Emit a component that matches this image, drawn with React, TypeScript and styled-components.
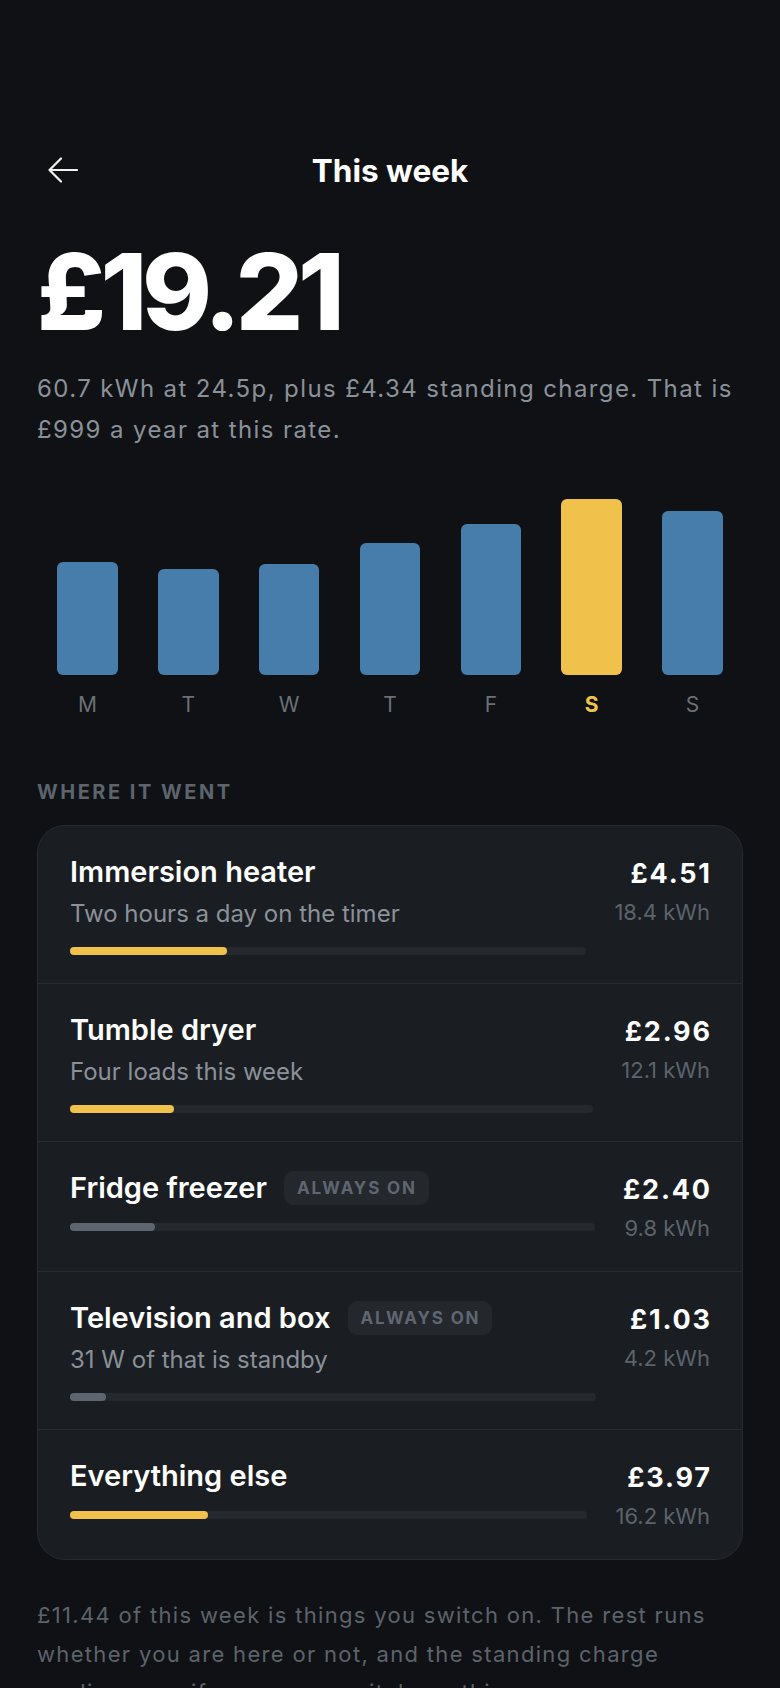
import styled, { createGlobalStyle } from 'styled-components';

const GlobalStyle = createGlobalStyle`
  html, body {
    margin: 0;
    padding: 0;
    background: #0f1115;
  }
  body {
    font-family: Inter, "Noto Sans", sans-serif;
    color: #ffffff;
    -webkit-font-smoothing: antialiased;
  }
`;

const TOTAL_KWH = 60.7;

const days = [
  { label: 'M', height: 64 },
  { label: 'T', height: 60 },
  { label: 'W', height: 63 },
  { label: 'T', height: 75 },
  { label: 'F', height: 86 },
  { label: 'S', height: 100, today: true },
  { label: 'S', height: 93 },
];

type Item = {
  name: string;
  note?: string;
  alwaysOn?: boolean;
  price: string;
  kwh: number;
};

const items: Item[] = [
  { name: 'Immersion heater', note: 'Two hours a day on the timer', price: '£4.51', kwh: 18.4 },
  { name: 'Tumble dryer', note: 'Four loads this week', price: '£2.96', kwh: 12.1 },
  { name: 'Fridge freezer', alwaysOn: true, price: '£2.40', kwh: 9.8 },
  { name: 'Television and box', note: '31 W of that is standby', alwaysOn: true, price: '£1.03', kwh: 4.2 },
  { name: 'Everything else', price: '£3.97', kwh: 16.2 },
];

const BackArrow = () => (
  <svg width="30" height="26" viewBox="0 0 30 26" fill="none">
    <path
      d="M13 1.5 1.5 13 13 24.5M1.5 13H29"
      stroke="#f2f2f2"
      strokeWidth="2.2"
      strokeLinecap="round"
      strokeLinejoin="round"
    />
  </svg>
);

export default function App() {
  return (
    <SPage>
      <GlobalStyle />
      <SHeader>
        <SBackButton aria-label="Back">
          <BackArrow />
        </SBackButton>
        <STitle>This week</STitle>
        <span />
      </SHeader>

      <SAmount>£19.21</SAmount>
      <SSummary>60.7 kWh at 24.5p, plus £4.34 standing charge. That is £999 a year at this rate.</SSummary>

      <SChart>
        {days.map((day, i) => (
          <SDay key={i}>
            <SBarSlot>
              <SBar $today={day.today} style={{ height: `${day.height}%` }} />
            </SBarSlot>
            <SDayLabel $today={day.today}>{day.label}</SDayLabel>
          </SDay>
        ))}
      </SChart>

      <SSectionLabel>Where it went</SSectionLabel>
      <SCard>
        {items.map((item) => (
          <SRow key={item.name}>
            <SMain>
              <STitleLine>
                <SItemName>{item.name}</SItemName>
                {item.alwaysOn && <SBadge>Always on</SBadge>}
              </STitleLine>
              {item.note && <SNote>{item.note}</SNote>}
              <STrack>
                <SFill $muted={item.alwaysOn} style={{ width: `${(item.kwh / TOTAL_KWH) * 100}%` }} />
              </STrack>
            </SMain>
            <SFigures>
              <SPrice>{item.price}</SPrice>
              <SKwh>{item.kwh.toFixed(1)} kWh</SKwh>
            </SFigures>
          </SRow>
        ))}
      </SCard>

      <SFootnote>
        £11.44 of this week is things you switch on. The rest runs whether you are here or not, and the standing charge
        applies even if you never switch anything on.
      </SFootnote>
    </SPage>
  );
}

const SPage = styled.div`
  box-sizing: border-box;
  min-height: 1688px;
  padding: 140px 37px 48px;
`;

const SHeader = styled.header`
  display: grid;
  grid-template-columns: 1fr auto 1fr;
  align-items: center;
  height: 60px;
`;

const SBackButton = styled.button`
  justify-self: start;
  display: flex;
  align-items: center;
  margin-left: 11px;
  padding: 0;
  border: none;
  background: none;
  cursor: pointer;
`;

const STitle = styled.h1`
  margin: 0;
  font-size: 31.5px;
  font-weight: 700;
`;

const SAmount = styled.div`
  margin-top: 39px;
  font-size: 106px;
  line-height: 106px;
  font-weight: 800;
  letter-spacing: -0.05em;
`;

const SSummary = styled.p`
  margin: 23px 0 0;
  font-size: 24px;
  line-height: 41px;
  letter-spacing: 0.058em;
  color: #8b9199;
`;

const SChart = styled.div`
  display: grid;
  grid-template-columns: repeat(7, 1fr);
  margin-top: 49px;
`;

const SDay = styled.div`
  display: flex;
  flex-direction: column;
  align-items: center;
`;

const SBarSlot = styled.div`
  display: flex;
  align-items: flex-end;
  justify-content: center;
  width: 100%;
  height: 176px;
`;

const SBar = styled.div<{ $today?: boolean }>`
  width: 60%;
  border-radius: 6px;
  background: ${({ $today }) => ($today ? '#f0c14b' : '#467dab')};
`;

const SDayLabel = styled.div<{ $today?: boolean }>`
  margin-top: 16px;
  font-size: 21px;
  line-height: 28px;
  font-weight: ${({ $today }) => ($today ? 700 : 400)};
  color: ${({ $today }) => ($today ? '#f0c14b' : '#6b7078')};
`;

const SSectionLabel = styled.h2`
  margin: 61px 0 0;
  font-size: 20px;
  line-height: 24px;
  font-weight: 700;
  letter-spacing: 0.125em;
  text-transform: uppercase;
  color: #5d646d;
`;

const SCard = styled.div`
  margin-top: 21px;
  background: #1a1d21;
  border: 1px solid #272b31;
  border-radius: 28px;
  overflow: hidden;
`;

const SRow = styled.div`
  display: flex;
  gap: 28px;
  padding: 28px 32px 28px;

  & + & {
    border-top: 1px solid #272b31;
  }
`;

const SMain = styled.div`
  flex: 1;
  min-width: 0;
`;

const STitleLine = styled.div`
  display: flex;
  align-items: center;
  gap: 17px;
  height: 36px;
`;

const SItemName = styled.div`
  font-size: 29px;
  line-height: 36px;
  font-weight: 600;
  white-space: nowrap;
`;

const SBadge = styled.span`
  display: inline-flex;
  align-items: center;
  height: 34px;
  padding: 0 12px 0 13px;
  border-radius: 9px;
  background: #24282d;
  color: #5f6670;
  font-size: 17px;
  font-weight: 700;
  letter-spacing: 0.11em;
  text-transform: uppercase;
`;

const SNote = styled.div`
  margin-top: 8px;
  font-size: 24px;
  line-height: 32px;
  color: #8b9199;
`;

const STrack = styled.div`
  margin-top: 17px;
  height: 8px;
  border-radius: 4px;
  background: #25292e;
`;

const SFill = styled.div<{ $muted?: boolean }>`
  height: 100%;
  border-radius: 4px;
  background: ${({ $muted }) => ($muted ? '#5f656e' : '#f0c14b')};
`;

const SFigures = styled.div`
  flex: none;
  padding-top: 2px;
  text-align: right;
`;

const SPrice = styled.div`
  margin-right: -1.8px;
  font-size: 27px;
  line-height: 36px;
  font-weight: 700;
  letter-spacing: 1.8px;
`;

const SKwh = styled.div`
  margin-top: 5px;
  font-size: 22px;
  line-height: 30px;
  color: #5c636b;
`;

const SFootnote = styled.p`
  margin: 36px 0 0;
  font-size: 22px;
  line-height: 38.5px;
  letter-spacing: 0.06em;
  color: #5d636b;
`;
